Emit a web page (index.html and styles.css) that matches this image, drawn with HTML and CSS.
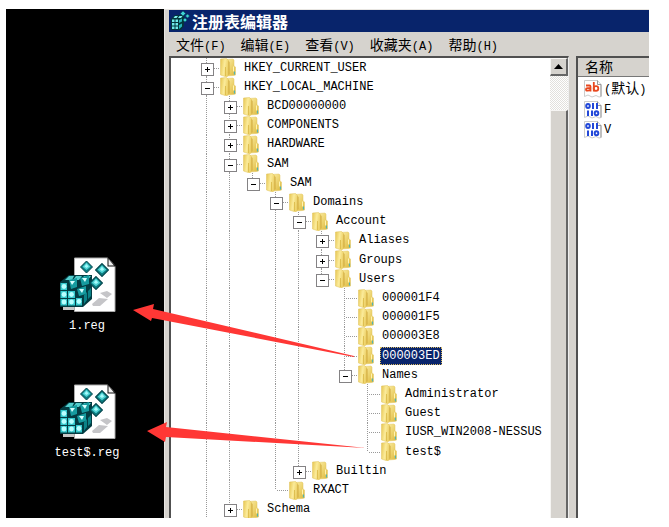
FILE: index.html
```html
<!DOCTYPE html>
<html lang="zh-CN">
<head>
<meta charset="utf-8">
<title>注册表编辑器</title>
<link rel="stylesheet" href="styles.css">
</head>
<body>
<svg class="defs" aria-hidden="true">
  <defs>
    <linearGradient id="gold" x1="0" x2="1" y2=".3"><stop offset="0" stop-color="#e6c550"/><stop offset=".55" stop-color="#fbeb9a"/><stop offset="1" stop-color="#ecd067"/></linearGradient>
    <linearGradient id="gold2" x1="0" y1="0" x2="1" y2="1"><stop offset="0" stop-color="#fdf0a8"/><stop offset="1" stop-color="#deb93c"/></linearGradient>
    <symbol id="folder" viewBox="0 0 16 19">
      <path d="M5 1.500 13 1l1 1v6l1.500 1v8l-2 .5-7 .5z" fill="url(#gold2)" stroke="#e2c763" stroke-width=".5"/>
      <path d="M.5 1 6.500.5 8.500 2.500v15L6.500 19 .5 17z" fill="url(#gold)" stroke="#e0c25a" stroke-width=".5"/>
      <path d="M8.500 3v14l1-.8V4z" fill="#cfa83a"/>
      <path d="M5.500 9v9" stroke="#d9b744" stroke-width=".8"/>
      <path d="M13.500 8.500v5" stroke="#fff3b0"/>
      <path d="M14.500 13.500v3" stroke="#4fb3b5" stroke-width="1.200"/>
    </symbol>
    <symbol id="gem" viewBox="0 0 13 13">
      <path d="M6.500.5 12.500 6.500 6.500 12.500.5 6.500z" fill="#0b7d82" stroke="#04474d"/>
      <path d="M6.500 2 10.500 6.200 6.500 9.500 2.500 6.200z" fill="#4fd3d4"/>
      <path d="M6.500 3.500 8.500 6 6.500 7.500 4.500 6z" fill="#a5fbfb"/>
    </symbol>
    <symbol id="reg" viewBox="0 0 57 57">
      <path d="M4 48h14v6H4z" fill="#c7c7c7"/>
      <path d="M15.500 2H49l7 8v45.500H15.500z" fill="#fff" stroke="#aaa"/>
      <path d="M48.500 1v9.500H57z" fill="#111"/>
      <path d="M49.500 3v6.500H55z" fill="#eee"/>
      <path d="M33 48l7-6 9 1-8 7h-7zM41 37l7-2 5 3-5 4z" fill="#c5c5c8"/>
      <path d="M1 26 10 19h23v24L24 51H1z" fill="#033c42"/>
      <path d="M10 20h5l-2 4H6zM17 20h6l-3 4h-6zM25 20h7l-4 5h-6z" fill="#53cdcd"/>
      <path d="M10 24 18 22v9l-6 2z" fill="#169b9f"/><path d="M11 25h5l-3 4z" fill="#d6ffff"/>
      <path d="M21 22 30 19v9l-7 2z" fill="#169b9f"/><path d="M23 22h5l-2 4z" fill="#d6ffff"/>
      <path d="M18 33 27 30v8l-7 2z" fill="#169b9f"/><path d="M20 33h5l-2 4z" fill="#d6ffff"/>
      <g fill="#35c8cc"><path d="M1.500 27H8v7H1.500zM1.500 35H8v7H1.500zM1.500 43H8v6.500H1.500zM9 35h7v7H9zM9 43h7v6.500H9zM17 42h6v7.500h-6z"/></g>
      <g fill="#b9ffff"><circle cx="5" cy="30.500" r="2.400"/><circle cx="5" cy="38.500" r="2.400"/><circle cx="5" cy="46" r="2.400"/><circle cx="12.500" cy="38.500" r="2.400"/><circle cx="12.500" cy="46" r="2.400"/><circle cx="20" cy="45.500" r="2.400"/></g>
      <path d="M25 39l3-3v8l-3 4zM29 35l3-3v8l-3 3z" fill="#0b8287"/>
      <use href="#gem" x="21" y="4" width="13" height="14"/>
      <use href="#gem" x="36" y="7" width="14" height="14"/>
      <use href="#gem" x="30" y="20" width="14" height="14"/>
    </symbol>
    <symbol id="page" viewBox="0 0 19 19">
      <path d="M1.500 1.500h13l3.500 4v12l-2 .5-3-1.500-4 1.500-4-2-3.500 1.500z" fill="#fff" stroke="#ccc"/>
      <path d="M14.500 1.500v4H18v12" fill="none" stroke="#999"/>
    </symbol>
    <symbol id="binary" viewBox="0 0 19 19">
      <use href="#page"/>
      <g fill="none" stroke="#2348d8" stroke-width="2"><ellipse cx="5" cy="6" rx="1.800" ry="2"/><path d="M10 3v6M14 3v6M5 10.500v5.500M9 10.500v5.500"/><ellipse cx="13.500" cy="13.200" rx="1.800" ry="2"/></g>
    </symbol>
  </defs>
</svg>

<main class="screen">
  <section class="desktop" aria-label="桌面">
    <figure class="shortcut"><svg><use href="#reg"/></svg><figcaption>1.reg</figcaption></figure>
    <figure class="shortcut"><svg><use href="#reg"/></svg><figcaption>test$.reg</figcaption></figure>
  </section>

  <section class="window">
    <header class="title">
      <svg viewBox="0 0 20 20" aria-hidden="true">
        <path d="M1 8 5 4h9v11l-3 4H1z" fill="#03363c"/>
        <path d="M5 5h3L6.500 7H3.500zM9.500 5h3l-1.500 2H8z" fill="#7cf0f0"/>
        <path d="M2 8.500h2.500V11H2zM2 12h2.500v2.500H2zM5.500 12H8v2.500H5.500zM5.500 8.500H8V11H5.500zM2 15.500h2.500V18H2zM5.500 15.500H8V18H5.500z" fill="#6fe9e9"/>
        <path d="M9 9l3-1.500v3L9 12zM9 14l3-1.500v3L9 18z" fill="#25b5b9"/>
        <path d="M13 0l2.500 2.500L13 5 10.500 2.500zM17.500 3l2 2-2 2-2-2zM15 7l2 2-2 2-2-2z" fill="#3fd3d5" stroke="#05545a" stroke-width=".5"/>
      </svg>
      <h1>注册表编辑器</h1>
    </header>
    <nav class="menu">
      <button>文件<span>(F)</span></button>
      <button>编辑<span>(E)</span></button>
      <button>查看<span>(V)</span></button>
      <button>收藏夹<span>(A)</span></button>
      <button>帮助<span>(H)</span></button>
    </nav>
    <div class="panes">
      <div class="pane tree-pane">
        <ul class="tree">
          <li><button class="g v h plus" aria-label="展开"></button><svg><use href="#folder"/></svg><span class="key">HKEY_CURRENT_USER</span></li>
          <li><button class="g v h minus" aria-label="折叠"></button><svg><use href="#folder"/></svg><span class="key">HKEY_LOCAL_MACHINE</span></li>
          <li><i class="g v"></i><button class="g v h plus" aria-label="展开"></button><svg><use href="#folder"/></svg><span class="key">BCD00000000</span></li>
          <li><i class="g v"></i><button class="g v h plus" aria-label="展开"></button><svg><use href="#folder"/></svg><span class="key">COMPONENTS</span></li>
          <li><i class="g v"></i><button class="g v h plus" aria-label="展开"></button><svg><use href="#folder"/></svg><span class="key">HARDWARE</span></li>
          <li><i class="g v"></i><button class="g v h minus" aria-label="折叠"></button><svg><use href="#folder"/></svg><span class="key">SAM</span></li>
          <li><i class="g v"></i><i class="g v"></i><button class="g v h last minus" aria-label="折叠"></button><svg><use href="#folder"/></svg><span class="key">SAM</span></li>
          <li><i class="g v"></i><i class="g v"></i><i class="g"></i><button class="g v h minus" aria-label="折叠"></button><svg><use href="#folder"/></svg><span class="key">Domains</span></li>
          <li><i class="g v"></i><i class="g v"></i><i class="g"></i><i class="g v"></i><button class="g v h minus" aria-label="折叠"></button><svg><use href="#folder"/></svg><span class="key">Account</span></li>
          <li><i class="g v"></i><i class="g v"></i><i class="g"></i><i class="g v"></i><i class="g v"></i><button class="g v h plus" aria-label="展开"></button><svg><use href="#folder"/></svg><span class="key">Aliases</span></li>
          <li><i class="g v"></i><i class="g v"></i><i class="g"></i><i class="g v"></i><i class="g v"></i><button class="g v h plus" aria-label="展开"></button><svg><use href="#folder"/></svg><span class="key">Groups</span></li>
          <li><i class="g v"></i><i class="g v"></i><i class="g"></i><i class="g v"></i><i class="g v"></i><button class="g v h last minus" aria-label="折叠"></button><svg><use href="#folder"/></svg><span class="key">Users</span></li>
          <li><i class="g v"></i><i class="g v"></i><i class="g"></i><i class="g v"></i><i class="g v"></i><i class="g"></i><i class="g v h"></i><svg><use href="#folder"/></svg><span class="key">000001F4</span></li>
          <li><i class="g v"></i><i class="g v"></i><i class="g"></i><i class="g v"></i><i class="g v"></i><i class="g"></i><i class="g v h"></i><svg><use href="#folder"/></svg><span class="key">000001F5</span></li>
          <li><i class="g v"></i><i class="g v"></i><i class="g"></i><i class="g v"></i><i class="g v"></i><i class="g"></i><i class="g v h"></i><svg><use href="#folder"/></svg><span class="key">000003E8</span></li>
          <li><i class="g v"></i><i class="g v"></i><i class="g"></i><i class="g v"></i><i class="g v"></i><i class="g"></i><i class="g v h"></i><svg><use href="#folder"/></svg><span class="key selected">000003ED</span></li>
          <li><i class="g v"></i><i class="g v"></i><i class="g"></i><i class="g v"></i><i class="g v"></i><i class="g"></i><button class="g v h last minus" aria-label="折叠"></button><svg><use href="#folder"/></svg><span class="key">Names</span></li>
          <li><i class="g v"></i><i class="g v"></i><i class="g"></i><i class="g v"></i><i class="g v"></i><i class="g"></i><i class="g"></i><i class="g v h"></i><svg><use href="#folder"/></svg><span class="key">Administrator</span></li>
          <li><i class="g v"></i><i class="g v"></i><i class="g"></i><i class="g v"></i><i class="g v"></i><i class="g"></i><i class="g"></i><i class="g v h"></i><svg><use href="#folder"/></svg><span class="key">Guest</span></li>
          <li><i class="g v"></i><i class="g v"></i><i class="g"></i><i class="g v"></i><i class="g v"></i><i class="g"></i><i class="g"></i><i class="g v h"></i><svg><use href="#folder"/></svg><span class="key">IUSR_WIN2008-NESSUS</span></li>
          <li><i class="g v"></i><i class="g v"></i><i class="g"></i><i class="g v"></i><i class="g v"></i><i class="g"></i><i class="g"></i><i class="g v h last"></i><svg><use href="#folder"/></svg><span class="key">test$</span></li>
          <li><i class="g v"></i><i class="g v"></i><i class="g"></i><i class="g v"></i><button class="g v h last plus" aria-label="展开"></button><svg><use href="#folder"/></svg><span class="key">Builtin</span></li>
          <li><i class="g v"></i><i class="g v"></i><i class="g"></i><i class="g v h last"></i><svg><use href="#folder"/></svg><span class="key">RXACT</span></li>
          <li><i class="g v"></i><button class="g v h plus" aria-label="展开"></button><svg><use href="#folder"/></svg><span class="key">Schema</span></li>
        </ul>
        <div class="scrollbar">
          <button class="up" aria-label="向上滚动"><svg viewBox="0 0 9 5"><path d="M4.500 0 9 5H0z"/></svg></button>
          <div class="thumb"></div>
        </div>
      </div>
      <div class="pane">
        <table class="values">
          <thead><tr><th>名称</th></tr></thead>
          <tbody>
            <tr><td><div class="value"><svg viewBox="0 0 19 19"><use href="#page"/><g fill="none" stroke="#e8481f" stroke-width="1.800"><path d="M3 6.500h3.500q1 0 1 1V12.500M7.500 9.200H4.500q-1.500 0-1.500 1.300t1.500 1.200q2 0 3-1"/><path d="M10.800 3v9.500"/><circle cx="13" cy="9.500" r="2.300"/></g></svg><span><b>(</b>默认<b>)</b></span></div></td></tr>
            <tr><td><div class="value"><svg viewBox="0 0 19 19"><use href="#binary"/></svg><b>F</b></div></td></tr>
            <tr><td><div class="value"><svg viewBox="0 0 19 19"><use href="#binary"/></svg><b>V</b></div></td></tr>
          </tbody>
        </table>
      </div>
    </div>
  </section>
</main>

<svg class="arrows" width="669" height="527" viewBox="0 0 669 527" aria-hidden="true">
  <path d="M133 310 154 304 153 309 354 356 354 357 152 318 151 321z"/>
  <path d="M147 431 167 422 166 427 366 448 166 437 165 442z"/>
</svg>
</body>
</html>
```

FILE: styles.css
```css
:root {
  --face: #d6d3ce;
  --navy: #08246b;
  --mono: "Liberation Mono", "Noto Sans CJK SC", monospace;
  --cjk: "Noto Sans CJK SC", sans-serif;
}

* {
  box-sizing: border-box;
}

body {
  margin: 0;
  background: #fff;
  color: #000;
  font: 12px/18px var(--mono);
}

button {
  margin: 0;
  padding: 0;
  border: 0;
  background: none;
  color: inherit;
  font: inherit;
}

.defs {
  position: absolute;
  width: 0;
  height: 0;
}

.screen {
  display: grid;
  grid-template-columns: 158px minmax(0, 1fr);
  height: 100vh;
  padding: 9px 20px 9px 6px;
}

/* Desktop */
.desktop {
  display: flex;
  flex-direction: column;
  align-items: center;
  gap: 48px;
  padding: 247px 0 0 4px;
  background: #000;
  color: #fff;
}

.shortcut {
  display: flex;
  flex-direction: column;
  align-items: center;
  gap: 4px;
  margin: 0;
}

.shortcut svg {
  width: 57px;
  height: 57px;
}

/* Editor window */
.window {
  display: flex;
  flex-direction: column;
  min-height: 0;
  padding: 1px 0 0 5px;
  background: var(--face);
  box-shadow: inset 1px 1px #e8e6e2;
}

.title {
  display: flex;
  flex: none;
  align-items: center;
  gap: 2px;
  height: 22px;
  padding-left: 1px;
  background: var(--navy);
  color: #fff;
}

.title svg {
  width: 20px;
  height: 20px;
}

.title h1 {
  margin: 0;
  font: bold 16px/20px var(--cjk);
}

.menu {
  display: flex;
  flex: none;
  gap: 15px;
  height: 24px;
  padding-left: 7px;
}

.menu button {
  font: 14px/24px var(--cjk);
  white-space: nowrap;
}

.menu span {
  font: 12px/24px var(--mono);
}

.panes {
  display: grid;
  flex: 1;
  grid-template-columns: minmax(0, 1fr) 73px;
  gap: 7px;
  min-height: 0;
}

.pane {
  display: flex;
  min-width: 0;
  min-height: 0;
  border: solid #505050;
  border-width: 2px 0 0 2px;
  background: #fff;
}

.tree-pane {
  overflow: hidden;
  border-right: 1px solid #eee;
}

/* Key tree */
.tree {
  display: flex;
  flex: 1;
  flex-direction: column;
  min-width: 0;
  margin: 0 0 -1px;
  padding: 0 0 0 24px;
  list-style: none;
}

.tree li {
  display: flex;
  flex: 1 1 0;
  align-items: center;
  min-height: 0;
}

.tree svg {
  flex: none;
  width: 16px;
  height: 19px;
  margin: 0 6px 0 2px;
}

.g {
  position: relative;
  flex: none;
  align-self: stretch;
  width: 23px;
}

.v {
  background: repeating-linear-gradient(#999 0 1px, #fff 1px 2px) 11px 0 / 1px 100% no-repeat;
}

.v.last {
  background-size: 1px 50%;
}

.h::before {
  content: "";
  position: absolute;
  top: 50%;
  left: 12px;
  width: 13px;
  height: 1px;
  background: repeating-linear-gradient(90deg, #fff 0 1px, #999 1px 2px);
}

.plus::after,
.minus::after {
  content: "";
  position: absolute;
  top: calc(50% - 5px);
  left: 6px;
  width: 11px;
  height: 11px;
  border: 1px solid #848284;
  background:
    linear-gradient(#000, #000) center / 5px 1px no-repeat,
    linear-gradient(#000, #000) center / 1px 5px no-repeat,
    #fff;
}

.minus::after {
  background:
    linear-gradient(#000, #000) center / 5px 1px no-repeat,
    #fff;
}

.key {
  padding: 0 2px;
  white-space: nowrap;
}

.selected {
  outline: 1px dotted #d8b860;
  outline-offset: -1px;
  background: var(--navy);
  color: #fff;
}

/* Scrollbar */
.scrollbar {
  display: flex;
  flex: none;
  flex-direction: column;
  gap: 34px;
  width: 18px;
  background: repeating-conic-gradient(#fff 0 25%, #e2e0dc 0 50%) 0 0 / 2px 2px;
}

.up,
.thumb {
  border: 1px solid #f6f5f3;
  border-right: 2px solid #666;
  background: var(--face);
}

.up {
  display: grid;
  flex: none;
  place-items: center;
  height: 18px;
  border-bottom: 2px solid #666;
}

.up svg {
  width: 9px;
  height: 5px;
}

.thumb {
  flex: 1;
  border-bottom: 0;
}

/* Value list */
.values {
  width: 100%;
  height: max-content;
  border-collapse: collapse;
}

.values th {
  height: 18px;
  padding: 0 0 0 7px;
  border-bottom: 1px solid #777;
  background: var(--face);
  font: 14px/17px var(--cjk);
  text-align: left;
}

.values td {
  height: 20px;
  padding: 0 0 0 5px;
}

.value {
  display: flex;
  align-items: center;
  gap: 2px;
  font: 14px/20px var(--cjk);
  white-space: nowrap;
}

.value svg {
  flex: none;
  width: 19px;
  height: 19px;
}

.value b {
  font: 12px/20px var(--mono);
}

/* Annotation arrows */
.arrows {
  position: absolute;
  top: 0;
  left: 0;
  fill: #ff3735;
  pointer-events: none;
}
```
